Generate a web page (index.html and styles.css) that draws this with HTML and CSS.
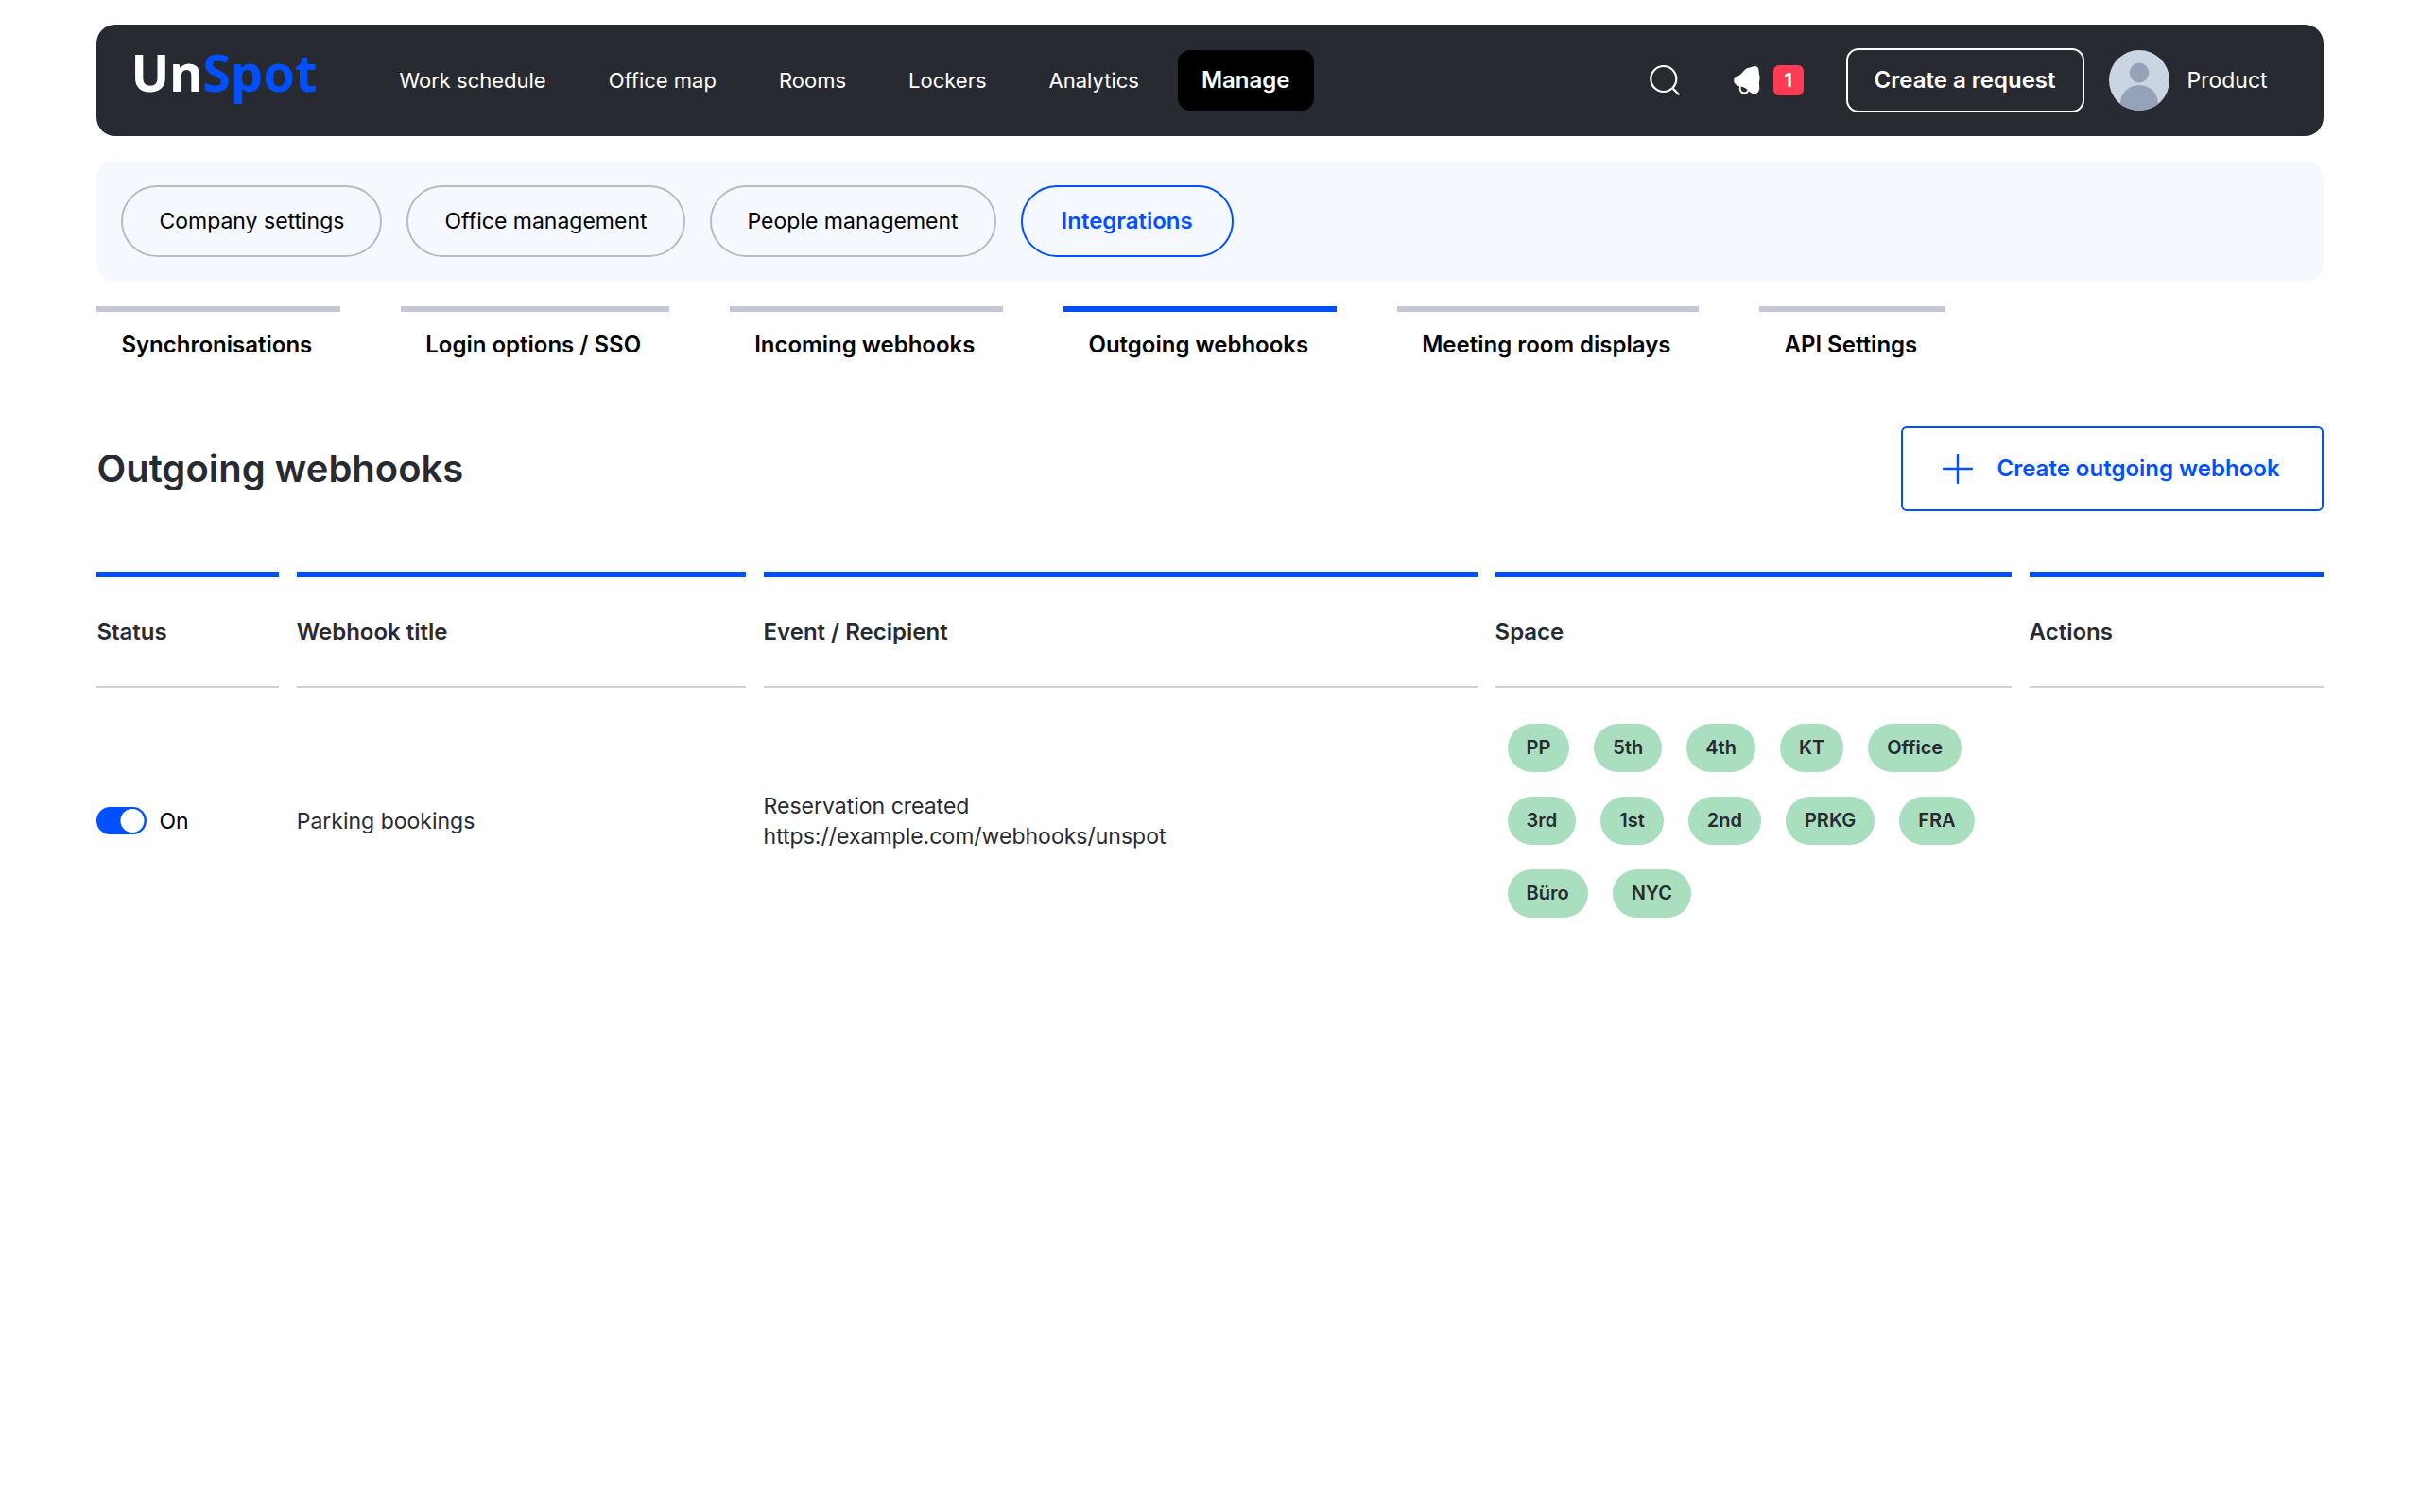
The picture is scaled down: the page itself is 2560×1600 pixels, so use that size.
FILE: index.html
```html
<!DOCTYPE html>
<html lang="en">
<head>
<meta charset="utf-8">
<title>Outgoing webhooks</title>
<link rel="stylesheet" href="styles.css">
</head>
<body>
<div class="page">
  <header class="topbar">
    <a class="logo" href="#">Un<span class="logo-accent">Spot</span></a>
    <nav class="main-nav">
      <a href="#">Work schedule</a>
      <a href="#">Office map</a>
      <a href="#">Rooms</a>
      <a href="#">Lockers</a>
      <a href="#">Analytics</a>
      <a class="active" href="#">Manage</a>
    </nav>
    <div class="tools">
      <button class="icon-button" type="button" aria-label="Search">
        <svg width="32" height="32" viewBox="0 0 32 32" fill="none" stroke="#fff" stroke-width="2.2" stroke-linecap="round"><circle cx="14.8" cy="14.5" r="13.5"/><path d="M24.5 24.5l6.2 6.2"/></svg>
      </button>
      <button class="news-button" type="button" aria-label="News">
        <svg width="28" height="32" viewBox="0 0 28 32"><path fill="#fff" d="M20 1.6c2-1.200 5-.6 6 1.600.8 2 .4 3.800 1 6.300.8 3 .7 5.500 0 8-.5 2.500.6 5 .2 7.800-.5 3.200-3 5.200-6 5-2.800-.2-4-2-6-3.800-2.200-2-4.500-3.600-8-4C3 22 .3 19.500.2 16.300.2 13 3 12.500 5 11.300c3-1.700 4.500-4.300 7-6.600 2.500-2.200 5.500-2 8-3.100z"/><path fill="none" stroke="#fff" stroke-width="1.800" d="M7 22c-1 4 .5 7.500 4 7.500 2.500 0 4-1.200 4.500-3.500"/></svg>
        <span class="badge">1</span>
      </button>
      <button class="request-button" type="button">Create a request</button>
      <a class="profile" href="#">
        <svg width="64" height="64" viewBox="0 0 64 64"><defs><clipPath id="disc"><circle cx="32" cy="32" r="32"/></clipPath></defs><g clip-path="url(#disc)"><path fill="#cbd5e1" d="M0 0h64v64H0z"/><circle cx="32" cy="24" r="10.400" fill="#94a3b8"/><path fill="#94a3b8" d="M12 64V57a20 20 0 0 1 40 0v7z"/></g></svg>
        <span>Product</span>
      </a>
    </div>
  </header>

  <nav class="sections">
    <a href="#">Company settings</a>
    <a href="#">Office management</a>
    <a href="#">People management</a>
    <a class="active" href="#">Integrations</a>
  </nav>

  <nav class="tabs">
    <a href="#">Synchronisations</a>
    <a href="#">Login options / SSO</a>
    <a href="#">Incoming webhooks</a>
    <a class="active" href="#">Outgoing webhooks</a>
    <a href="#">Meeting room displays</a>
    <a href="#">API Settings</a>
  </nav>

  <main>
    <div class="title-row">
      <h1>Outgoing webhooks</h1>
      <button class="create-button" type="button">
        <svg width="32" height="32" viewBox="0 0 32 32" fill="none" stroke="#0050ff" stroke-width="2.400" stroke-linecap="round"><path d="M16 1v30M1 16h30"/></svg>
        Create outgoing webhook
      </button>
    </div>

    <table class="webhooks">
      <colgroup><col class="c-status"><col class="c-title"><col class="c-event"><col class="c-space"><col class="c-actions"></colgroup>
      <thead>
        <tr><th scope="col">Status</th><th scope="col">Webhook title</th><th scope="col">Event / Recipient</th><th scope="col">Space</th><th scope="col">Actions</th></tr>
      </thead>
      <tbody>
        <tr>
          <td><label class="switch"><input type="checkbox" checked><span>On</span></label></td>
          <td>Parking bookings</td>
          <td>Reservation created<br>https://example.com/webhooks/unspot</td>
          <td>
            <ul class="spaces">
              <li>PP</li><li>5th</li><li>4th</li><li>KT</li><li>Office</li><li>3rd</li><li>1st</li><li>2nd</li><li>PRKG</li><li>FRA</li><li>Büro</li><li>NYC</li>
            </ul>
          </td>
          <td></td>
        </tr>
      </tbody>
    </table>
  </main>
</div>
</body>
</html>
```
FILE: styles.css
```css
* { box-sizing: border-box; }

body {
  margin: 0;
  background: #fff;
  color: #000;
  font: 400 23px/32px Inter, "Liberation Sans", sans-serif;
}

a { color: inherit; text-decoration: none; }
button { font: inherit; cursor: pointer; }
svg { display: block; flex: none; }

.page { padding: 26px 4% 64px; }

.topbar {
  display: flex;
  align-items: center;
  min-height: 118px;
  padding: 0 59px 0 36px;
  border-radius: 20px;
  background: #282a32;
  color: #fff;
}

.logo {
  width: 251px;
  padding-bottom: 18px;
  font: 700 54px/64px "Noto Sans", sans-serif;
}
.logo-accent { color: #0050ff; }

.main-nav { display: flex; align-items: center; font-size: 22px; }
.main-nav a { padding: 0 33px; white-space: nowrap; }
.main-nav .active {
  margin-left: 8px;
  padding: 16px 25px;
  border-radius: 13px;
  background: #000;
  font-size: 24px;
  font-weight: 600;
}

.tools { display: flex; align-items: center; margin-left: auto; }
.icon-button, .news-button {
  display: flex;
  align-items: center;
  padding: 0;
  border: 0;
  background: none;
  color: #fff;
}
.news-button { gap: 14px; margin: 0 45px 0 57px; }
.badge {
  width: 32px;
  border-radius: 6px;
  background: #ff3b54;
  font-size: 20px;
  font-weight: 700;
}
.request-button {
  height: 68px;
  padding: 0 28px;
  border: 2px solid #fff;
  border-radius: 13px;
  background: none;
  color: #fff;
  font-size: 24px;
  font-weight: 600;
}
.profile { display: flex; align-items: center; gap: 19px; margin-left: 26px; }

.sections {
  display: flex;
  gap: 26px;
  margin-top: 26px;
  padding: 26px;
  border-radius: 20px;
  background: #f5f8ff;
}
.sections a {
  padding: 20px 38px;
  border: 2px solid #bbb;
  border-radius: 38px;
}
.sections .active {
  padding: 20px 41px;
  border-color: #0050ff;
  color: #0050ff;
  font-size: 24px;
  font-weight: 600;
}

.tabs { display: flex; gap: 64px; margin-top: 26px; }
.tabs a {
  padding: 19px 30px 19px 26px;
  border-top: 6px solid #c5c8d4;
  font-size: 24px;
  font-weight: 600;
}
.tabs .active { border-color: #0050ff; }

.title-row {
  display: flex;
  align-items: center;
  justify-content: space-between;
  margin-top: 51px;
}
h1 { margin: 0; color: #282a32; font-size: 40px; font-weight: 600; line-height: 52px; }
.create-button {
  display: flex;
  align-items: center;
  gap: 26px;
  height: 90px;
  padding: 0 44px 0 42px;
  border: 2px solid #0050ff;
  border-radius: 6px;
  background: #fff;
  color: #0050ff;
  font-size: 24px;
  font-weight: 600;
}

.webhooks {
  width: calc(100% + 38px);
  margin: 64px -19px 0;
  border-spacing: 19px 0;
  table-layout: fixed;
  color: #282a32;
  text-align: left;
}
.c-status { width: 8.1%; }
.c-title { width: 20%; }
.c-event { width: 31.8%; }
.c-space { width: 23%; }
.c-actions { width: 13.1%; }
.webhooks th {
  padding: 42px 0 41px;
  border-top: 6px solid #0050ff;
  border-bottom: 2px solid #d0d0d0;
  font-size: 24px;
  font-weight: 600;
}
.webhooks td { padding: 25px 0; vertical-align: middle; }

.switch { display: flex; align-items: center; gap: 13px; color: #000; }
.switch input {
  appearance: none;
  width: 53px;
  height: 29px;
  margin: 0;
  border-radius: 15px;
  background: radial-gradient(circle at 38px 50%, #fff 12px, #0050ff 13px);
}

.spaces { display: flex; flex-wrap: wrap; margin: 0; padding: 0; list-style: none; }
.spaces li {
  margin: 13px;
  padding: 10px 20px;
  border-radius: 26px;
  background: #a9dfbf;
  font-size: 20px;
  font-weight: 600;
  line-height: 31px;
}
```
